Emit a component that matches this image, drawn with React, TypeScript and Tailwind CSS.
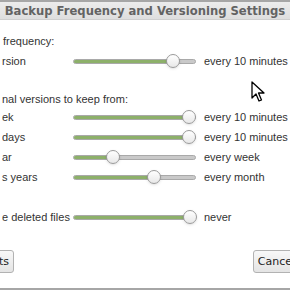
import React from 'react';

type Row = { label: string; value: number; text: string };

// thumb centre positions measured in px along the 123px track
const versionRows: Row[] = [
  { label: 'ek', value: 116, text: 'every 10 minutes' },
  { label: 'days', value: 116, text: 'every 10 minutes' },
  { label: 'ar', value: 40, text: 'every week' },
  { label: 's years', value: 81, text: 'every month' },
];

const Slider: React.FC<{ value: number }> = ({ value }) => (
  <div className="relative w-[123px] h-[14px] flex items-center">
    <div className="w-full h-[5px] rounded-full bg-[#c9c9c9] border border-[#a9a9a9] overflow-hidden">
      <div className="h-full bg-[#8db06a] border-r border-[#6f9150]" style={{ width: value }} />
    </div>
    <div
      className="absolute top-0 w-[14px] h-[14px] rounded-full border border-[#9a9a9a] bg-gradient-to-b from-white to-[#e8e8e8] shadow-sm"
      style={{ left: value - 7 }}
    />
  </div>
);

const SliderRow: React.FC<Row> = ({ label, value, text }) => (
  <div className="flex items-center h-[20px]">
    <span className="w-[73px] pl-[2px] whitespace-nowrap">{label}</span>
    <Slider value={value} />
    <span className="ml-[8px] whitespace-nowrap">{text}</span>
  </div>
);

const App: React.FC = () => {
  return (
    <div className="relative w-[290px] h-[290px] overflow-hidden bg-white text-[11px] text-[#333] font-['Liberation_Sans',Arial,sans-serif] leading-[14px]">
      <div className="h-[20px] border-t-2 border-[#a6a6a6] bg-gradient-to-b from-[#ececec] to-[#dedede] border-b border-b-[#cfcfcf] flex items-center justify-center">
        <span className="font-['DejaVu_Sans',sans-serif] font-bold text-[11.6px] text-[#636363] whitespace-nowrap">
          Backup Frequency and Versioning Settings
        </span>
      </div>

      <div className="mt-[14px] pl-[3px]">frequency:</div>
      <div className="mt-[3px]">
        <SliderRow label="rsion" value={100} text="every 10 minutes" />
      </div>

      <div className="mt-[21px] pl-[2px]">nal versions to keep from:</div>
      <div className="mt-[1px] flex flex-col">
        {versionRows.map((r) => (
          <SliderRow key={r.label} {...r} />
        ))}
      </div>

      <div className="mt-[20px]">
        <SliderRow label="e deleted files" value={117} text="never" />
      </div>

      <div className="mt-[23px] flex justify-between font-['DejaVu_Sans',sans-serif] text-[11px] text-[#222]">
        <button className="ml-[-42px] h-[23px] px-[4px] rounded-[3px] border border-[#b2b2b2] bg-gradient-to-b from-[#f8f8f8] to-[#e4e4e4]">
          Defaults
        </button>
        <button className="mr-[-10px] h-[23px] px-[4px] rounded-[3px] border border-[#b2b2b2] bg-gradient-to-b from-[#f8f8f8] to-[#e4e4e4]">
          Cancel
        </button>
      </div>

      <div className="mt-[15px] h-[2px] bg-[#a6a6a6]" />

      <svg className="absolute left-[251px] top-[81px]" width="14" height="22" viewBox="0 0 14 22">
        <path d="M1 1 L1 17 L5 13 L8 20 L10.5 19 L7.5 12 L13 12 Z" fill="white" stroke="black" strokeWidth="1.3" strokeLinejoin="round" />
      </svg>
    </div>
  );
};

export default App;
